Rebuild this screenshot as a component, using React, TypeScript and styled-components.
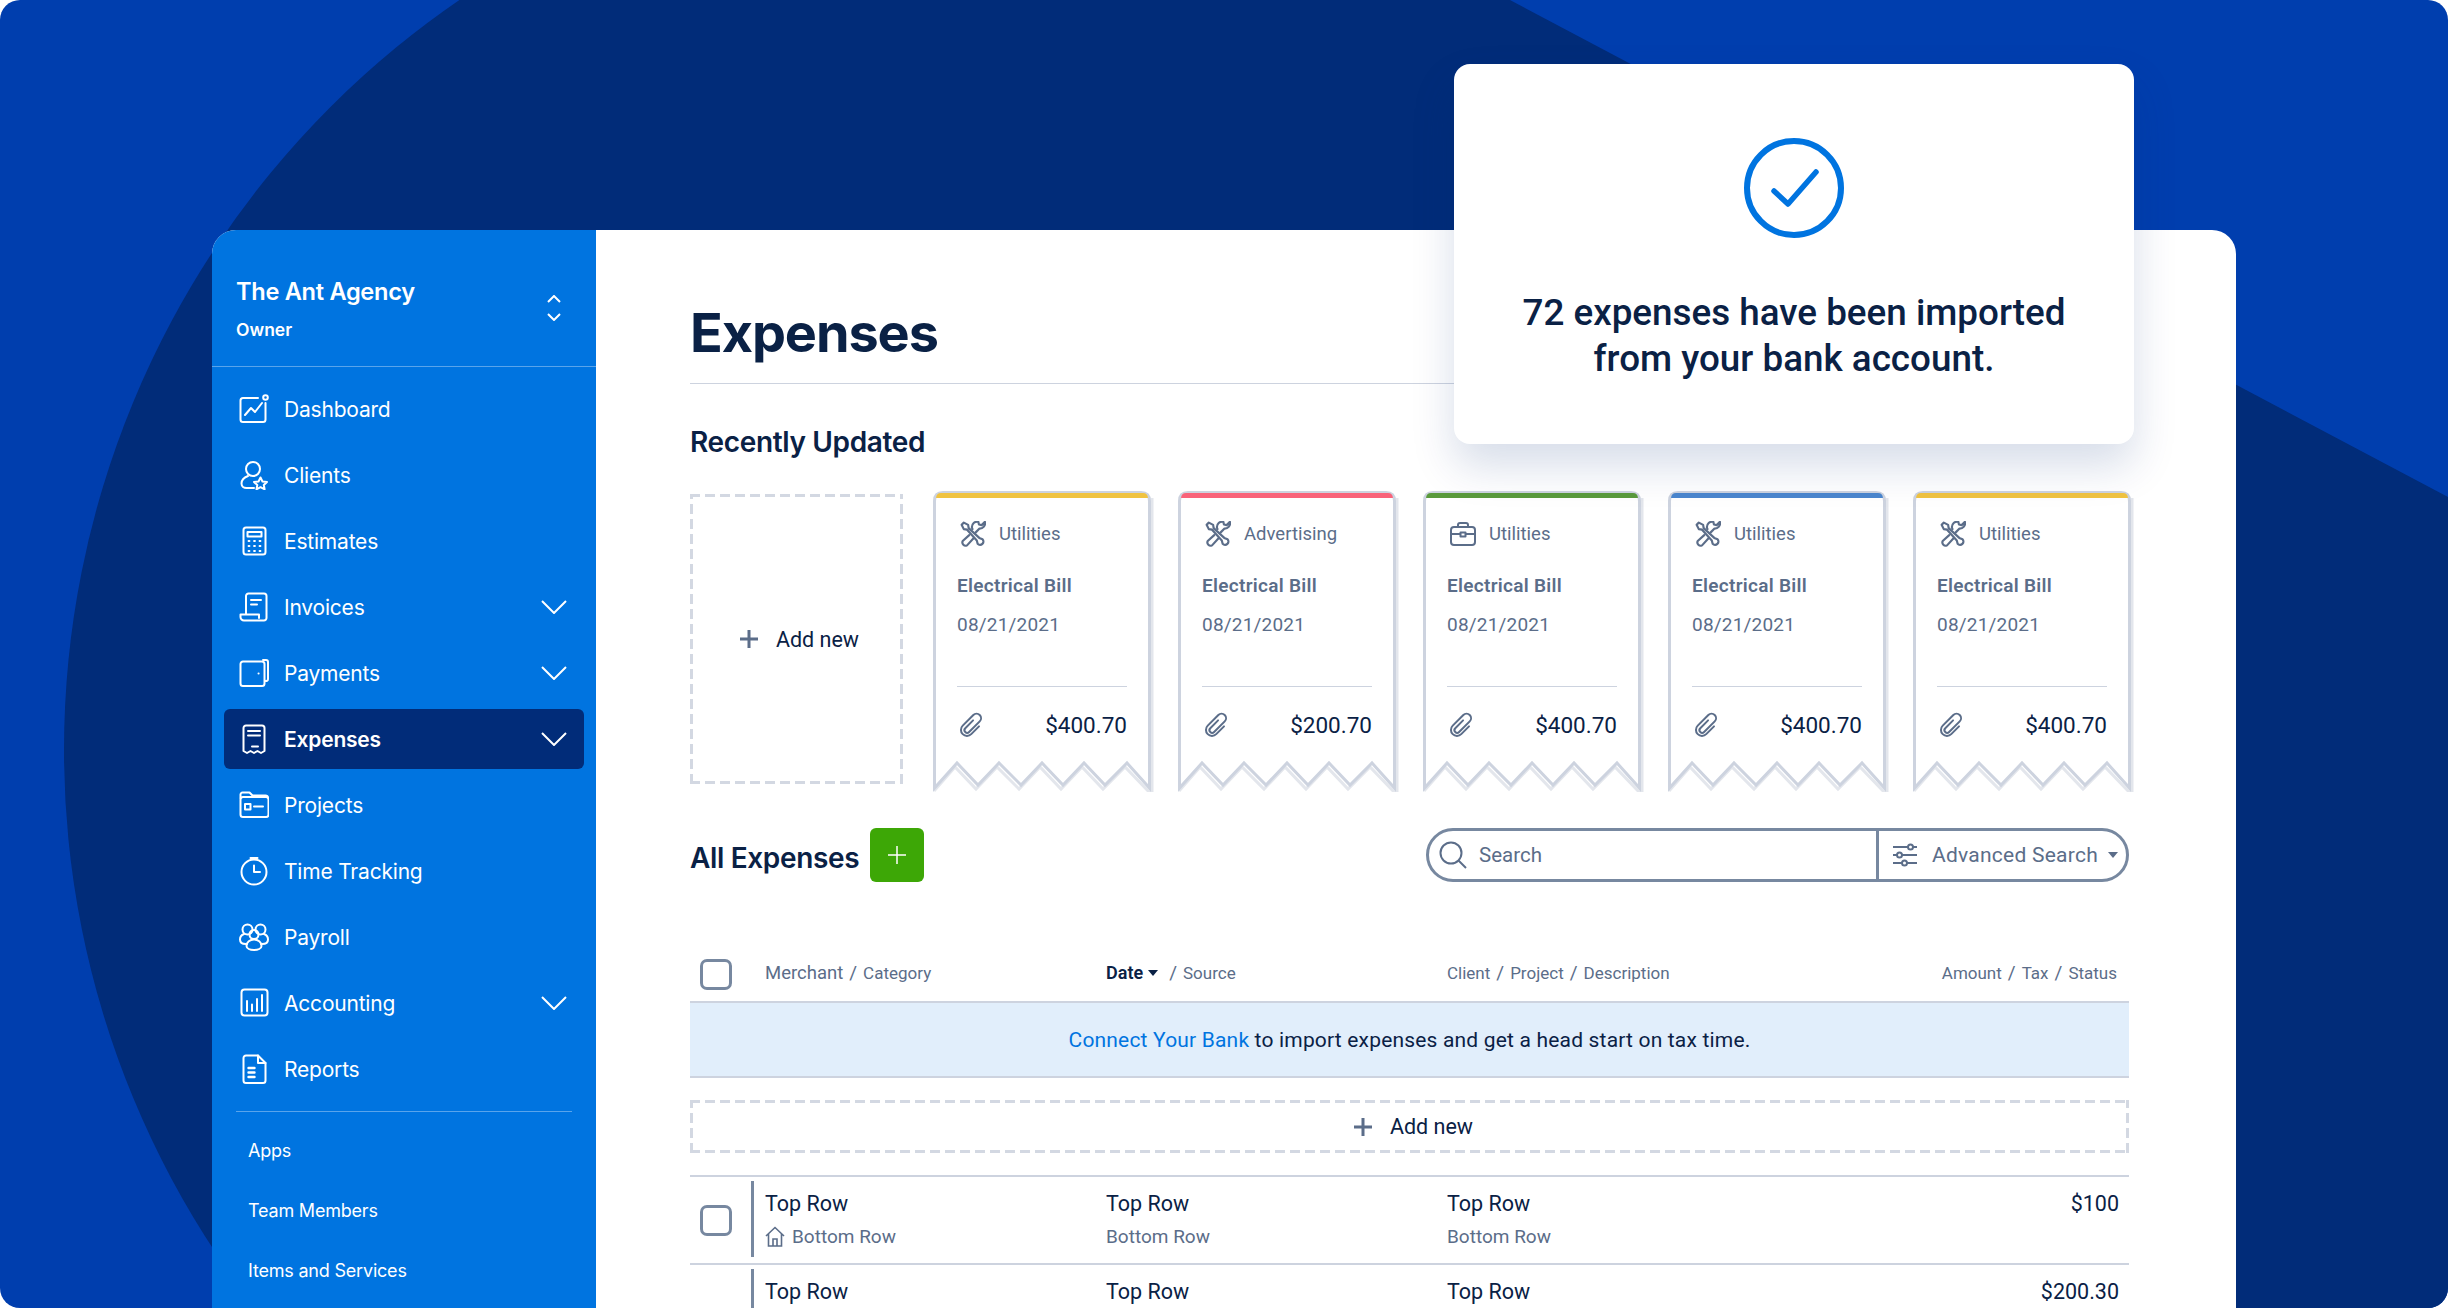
import React from 'react';
import styled, { createGlobalStyle, css } from 'styled-components';

const NAVY = '#0a2145';
const SLATE = '#5b6d89';
const LINE = '#cdd3df';
const STEEL = '#7788a0';
const BLUE = '#0074e0';
const DEEP = '#012c79';

const GlobalStyle = createGlobalStyle`
    html, body {
        margin: 0;
        padding: 0;
        background: #fff;
    }
    * {
        box-sizing: border-box;
    }
`;

// long dashes on all four sides, a dashed border is too short for these
const dashedEdge = css`
    background-image:
        repeating-linear-gradient(90deg, #d3d8e2 0 10px, transparent 10px 15px),
        repeating-linear-gradient(90deg, #d3d8e2 0 10px, transparent 10px 15px),
        repeating-linear-gradient(0deg, #d3d8e2 0 10px, transparent 10px 15px),
        repeating-linear-gradient(0deg, #d3d8e2 0 10px, transparent 10px 15px);
    background-position: left top, left bottom, left top, right top;
    background-repeat: no-repeat;
    background-size: 100% 3px, 100% 3px, 3px 100%, 3px 100%;
`;

const Frame = styled.div`
    position: relative;
    display: flex;
    width: 2448px;
    height: 1308px;
    padding: 230px 212px 0;
    overflow: hidden;
    border-radius: 20px;
    background: #003eae;
    font-family: Roboto, 'Liberation Sans', sans-serif;
    color: ${NAVY};
`;

const Backdrop = styled.svg`
    position: absolute;
    inset: 0;
`;

const Window = styled.div`
    position: relative;
    display: flex;
    width: 2024px;
    height: 1078px;
    overflow: hidden;
    border-radius: 24px 24px 0 0;
    background: #fff;
`;

const Sidebar = styled.aside`
    flex: 0 0 384px;
    background: ${BLUE};
    color: #fff;
    font-family: Inter, 'Liberation Sans', sans-serif;
`;

const Account = styled.div`
    display: flex;
    align-items: center;
    justify-content: space-between;
    height: 137px;
    padding: 44px 35px 25px 24px;
    border-bottom: 1px solid rgba(255, 255, 255, 0.35);
`;

const AccountName = styled.div`
    font-size: 23.6px;
    font-weight: 600;
    line-height: 36px;
    letter-spacing: -0.3px;
`;

const AccountRole = styled.div`
    margin-top: 8px;
    font-size: 17.5px;
    font-weight: 600;
    line-height: 24px;
`;

const NavList = styled.nav`
    display: flex;
    flex-direction: column;
    gap: 6px;
    padding: 12px 12px 0;
`;

const NavItem = styled.div<{ $active?: boolean }>`
    display: flex;
    align-items: center;
    height: 60px;
    padding: 0 17px 0 15px;
    border-radius: 6px;
    background: ${({ $active }) => ($active ? DEEP : 'transparent')};
    font-size: 21px;
    font-weight: ${({ $active }) => ($active ? 600 : 400)};
    letter-spacing: -0.2px;
`;

const NavIcon = styled.svg`
    flex: 0 0 30px;
    margin-right: 15px;
    fill: none;
    stroke: #fff;
    stroke-width: 2;
    stroke-linecap: round;
    stroke-linejoin: round;
`;

const NavLabel = styled.span`
    flex: 1;
`;

const NavDivider = styled.div`
    height: 1px;
    margin: 12px 24px 8px;
    background: rgba(255, 255, 255, 0.35);
`;

const SubItem = styled.div`
    display: flex;
    align-items: center;
    height: 60px;
    padding-left: 36px;
    font-size: 18px;
    letter-spacing: -0.2px;
`;

const Content = styled.main`
    flex: 0 0 1640px;
    min-width: 0;
    padding: 0 107px 0 94px;
`;

const PageTitle = styled.h1`
    height: 154px;
    margin: 0;
    padding-top: 71px;
    border-bottom: 1px solid ${LINE};
    font-family: Inter, 'Liberation Sans', sans-serif;
    font-size: 54px;
    font-weight: 700;
    line-height: 64px;
    letter-spacing: -1.1px;
`;

const SectionTitle = styled.h2`
    margin: 0;
    font-family: Inter, 'Liberation Sans', sans-serif;
    font-size: 28px;
    font-weight: 600;
    line-height: 36px;
    letter-spacing: -0.35px;
`;

const RecentTitle = styled(SectionTitle)`
    margin-top: 40px;
`;

const AllTitle = styled(SectionTitle)`
    padding-top: 5px;
`;

const CardRow = styled.div`
    display: flex;
    gap: 25px;
    margin-top: 31px;
`;

const AddTile = styled.div`
    ${dashedEdge}
    display: flex;
    flex: 0 0 213px;
    align-items: center;
    justify-content: center;
    gap: 17px;
    height: 290px;
    margin: 3px 5px 0 0;
    padding-left: 5px;
    font-size: 21.5px;
`;

const Receipt = styled.div`
    position: relative;
    flex: 0 0 220px;
    height: 301px;
    padding: 31px 26px 0 24px;
`;

const ReceiptOutline = styled.svg`
    position: absolute;
    top: 0;
    left: 0;
`;

const ReceiptBody = styled.div`
    position: relative;
`;

const CategoryRow = styled.div`
    display: flex;
    align-items: center;
    gap: 13px;
    height: 24px;
    padding-left: 3px;
    color: ${SLATE};
    font-size: 18.5px;
`;

const ToolIcon = styled.svg`
    flex: none;
    fill: none;
    stroke: ${SLATE};
    stroke-width: 2;
    stroke-linecap: round;
    stroke-linejoin: round;
`;

const ReceiptName = styled.div`
    margin-top: 28px;
    color: ${SLATE};
    font-size: 19px;
    font-weight: 600;
    line-height: 24px;
    letter-spacing: 0.3px;
`;

const ReceiptDate = styled.div`
    margin-top: 15px;
    color: ${SLATE};
    font-size: 19px;
    line-height: 24px;
    letter-spacing: 0.2px;
`;

const ReceiptFooter = styled.div`
    display: flex;
    align-items: center;
    justify-content: space-between;
    height: 52px;
    margin-top: 49px;
    padding-top: 25px;
    border-top: 1px solid ${LINE};
    font-size: 22.5px;
`;

const ClipIcon = styled(ToolIcon)`
    margin-left: 1px;
`;

const Toolbar = styled.div`
    display: flex;
    align-items: center;
    margin-top: 36px;
`;

const GreenButton = styled.div`
    display: flex;
    align-items: center;
    justify-content: center;
    width: 54px;
    height: 54px;
    margin-left: 11px;
    border-radius: 6px;
    background: #3da706;
`;

const SearchBox = styled.div`
    display: flex;
    width: 703px;
    height: 54px;
    margin-left: auto;
    border: 3px solid ${STEEL};
    border-radius: 27px;
    color: ${SLATE};
`;

const SearchField = styled.div`
    display: flex;
    flex: 1;
    align-items: center;
    gap: 12px;
    padding-left: 10px;
    font-size: 20.5px;
`;

const AdvancedSearch = styled.div`
    display: flex;
    flex: 0 0 250px;
    align-items: center;
    gap: 14px;
    padding-left: 13px;
    border-left: 3px solid ${STEEL};
    font-size: 21px;
    letter-spacing: 0.25px;
    white-space: nowrap;
`;

const Caret = styled.span<{ $dark?: boolean }>`
    display: inline-block;
    width: 0;
    height: 0;
    margin: 0 5px;
    border-top: 6px solid ${({ $dark }) => ($dark ? NAVY : SLATE)};
    border-right: 5px solid transparent;
    border-left: 5px solid transparent;
`;

const SearchCaret = styled(Caret)`
    margin: 0 0 0 -4px;
`;

const TableGrid = styled.div`
    display: grid;
    grid-template-columns: 61px 341px 341px 1fr auto;
    padding-right: 10px;
`;

const TableHead = styled(TableGrid)`
    align-items: center;
    height: 42px;
    margin-top: 77px;
    padding-right: 12px;
    padding-bottom: 12px;
    color: ${SLATE};
    font-size: 17px;
`;

const HeadCell = styled.div`
    display: flex;
    align-items: center;
    padding: 0 0 4px 14px;
    white-space: pre;
`;

const HeadMain = styled.span`
    font-size: 18.5px;
`;

const HeadDate = styled.span`
    color: ${NAVY};
    font-size: 18px;
    font-weight: 600;
`;

const Slash = styled.span`
    margin: 0 6px;
    font-size: 19px;
`;

const CheckCell = styled.div`
    display: flex;
    align-items: center;
    padding-left: 10px;
`;

const CheckBox = styled.div`
    width: 32px;
    height: 31px;
    border: 3px solid ${STEEL};
    border-radius: 7px;
    background: #fff;
`;

const Banner = styled.div`
    display: flex;
    align-items: center;
    justify-content: center;
    height: 77px;
    border-top: 2px solid ${LINE};
    border-bottom: 2px solid ${LINE};
    background: #e1eefb;
    font-size: 21px;
    letter-spacing: 0.18px;
    white-space: pre;
`;

const BankLink = styled.span`
    color: ${BLUE};
`;

const AddStrip = styled.div`
    ${dashedEdge}
    display: flex;
    align-items: center;
    justify-content: center;
    gap: 17px;
    height: 53px;
    margin-top: 22px;
    padding-left: 7px;
    font-size: 21.5px;
`;

const Rows = styled.div`
    margin-top: 22px;
`;

const Row = styled(TableGrid)<{ $tall?: boolean }>`
    height: ${({ $tall }) => ($tall ? 118 : 88)}px;
    border-top: 2px solid ${LINE};
`;

const RowCell = styled.div<{ $bar?: boolean; $right?: boolean; $tall?: boolean }>`
    display: flex;
    flex-direction: column;
    gap: 8px;
    height: ${({ $tall }) => ($tall ? 106 : 76)}px;
    margin-top: 4px;
    padding: 10px 0 0 ${({ $bar }) => ($bar ? 11 : 14)}px;
    border-left: ${({ $bar }) => ($bar ? `3px solid ${STEEL}` : 'none')};
    text-align: ${({ $right }) => ($right ? 'right' : 'left')};
`;

const TopLine = styled.div`
    font-size: 21.5px;
    line-height: 26px;
`;

const BottomLine = styled.div`
    display: flex;
    align-items: center;
    gap: 7px;
    color: ${SLATE};
    font-size: 19px;
    line-height: 24px;
`;

const Toast = styled.div`
    position: absolute;
    top: 64px;
    left: 1454px;
    display: flex;
    flex-direction: column;
    align-items: center;
    width: 680px;
    height: 380px;
    padding-top: 74px;
    border-radius: 16px;
    background: #fff;
    box-shadow: 0 22px 44px rgba(1, 44, 121, 0.16);
`;

const ToastText = styled.div`
    margin-top: 52px;
    font-size: 36.8px;
    font-weight: 500;
    line-height: 46px;
    text-align: center;
`;

const Chevron = () => (
    <svg width="26" height="14" viewBox="0 0 26 14" fill="none" stroke="#fff" strokeWidth="2">
        <path d="M1 1l12 12L25 1" />
    </svg>
);

const navItems: { label: string; open?: boolean; active?: boolean; icon: React.ReactNode }[] = [
    {
        label: 'Dashboard',
        icon: (
            <>
                <path d="M19 4H4a2.5 2.5 0 0 0-2.5 2.5v19A2.5 2.5 0 0 0 4 28h20a2.5 2.5 0 0 0 2.5-2.5V9" />
                <circle cx="26.5" cy="3.5" r="2.3" />
                <path d="M6 21l6-7 4 4 7-9" />
            </>
        ),
    },
    {
        label: 'Clients',
        icon: (
            <>
                <circle cx="14" cy="9" r="7" />
                <path d="M9 16c-4 1.5-6.5 4-6.5 7.5 0 3 2.5 4.5 5 4.5H15" />
                <path d="M21.5 17.5l2 4 4.5.5-3.2 3 .8 4.3-4.1-2.1-4 2.1.8-4.3-3.3-3 4.5-.5z" />
            </>
        ),
    },
    {
        label: 'Estimates',
        icon: (
            <>
                <rect x="4.5" y="1.5" width="22" height="27" rx="2.5" />
                <rect x="8.5" y="6" width="14" height="4.5" />
                <path
                    d="M9.5 15h1M15 15h1M20.5 15h1M9.5 20h1M15 20h1M20.5 20h1M9.5 25h1M15 25h1M20.5 25h1"
                    strokeWidth="1.8"
                />
            </>
        ),
    },
    {
        label: 'Invoices',
        open: true,
        icon: (
            <>
                <path d="M7 22V4a2.5 2.5 0 0 1 2.5-2.5H25A2.5 2.5 0 0 1 27.5 4v22a2.5 2.5 0 0 1-2.5 2.5H5A3.5 3.5 0 0 1 1.5 25v-2.5H20v3.5" />
                <path d="M12 8h10M12 12.5h6" />
            </>
        ),
    },
    {
        label: 'Payments',
        open: true,
        icon: (
            <>
                <path d="M4 3.5h19a2.5 2.5 0 0 1 2.5 2.5v19.5a2.5 2.5 0 0 1-2.5 2.5H4a2.5 2.5 0 0 1-2.5-2.5V6A2.5 2.5 0 0 1 4 3.5z" />
                <path d="M24 2h3a2 2 0 0 1 2 2v17a2 2 0 0 1-3 1.8" />
                <path d="M19.5 15.5h.1" />
            </>
        ),
    },
    {
        label: 'Expenses',
        open: true,
        active: true,
        icon: (
            <>
                <path d="M4.5 27V4A2.5 2.5 0 0 1 7 1.5h16A2.5 2.5 0 0 1 25.5 4v23l-3.5 2-3.5-2-3.5 2-3.5-2-3.5 2z" />
                <path d="M9 7h12M9 11.5h12M13 22.5h6" />
            </>
        ),
    },
    {
        label: 'Projects',
        icon: (
            <>
                <path d="M1.5 8V4.5a2 2 0 0 1 2-2h7l3 3h13a2.5 2.5 0 0 1 2.5 2" />
                <rect x="1.5" y="7" width="28" height="20" rx="2.5" />
                <rect x="6" y="14" width="5.5" height="5.5" />
                <path d="M15 16.5h9" />
            </>
        ),
    },
    {
        label: 'Time Tracking',
        icon: (
            <>
                <circle cx="15" cy="16" r="12.5" />
                <path d="M11.5 2h7M15 9.5V16h6" />
            </>
        ),
    },
    {
        label: 'Payroll',
        icon: (
            <>
                <circle cx="8.5" cy="7.5" r="5" />
                <circle cx="21.5" cy="7.5" r="5" />
                <circle cx="15" cy="12.5" r="4.5" />
                <path d="M5 12c-2.5 1-4 3.2-4 5.5 0 2.8 2.5 4.5 6 4.5h1" />
                <path d="M25 12c2.5 1 4 3.2 4 5.5 0 2.8-2.5 4.5-6 4.5h-1" />
                <path d="M7.5 24c0-4 3.5-6.5 7.5-6.5s7.5 2.5 7.5 6.5c0 2.5-3.5 4-7.5 4s-7.5-1.5-7.5-4z" />
            </>
        ),
    },
    {
        label: 'Accounting',
        open: true,
        icon: (
            <>
                <rect x="2.5" y="1.5" width="26" height="26" rx="3" />
                <path d="M8 13v10M13 16.5V23M18 11v12M23 7v16" />
            </>
        ),
    },
    {
        label: 'Reports',
        icon: (
            <>
                <path d="M7 1.5h12L26.5 9v17.5a2.5 2.5 0 0 1-2.5 2.5H7a2.5 2.5 0 0 1-2.5-2.5V4A2.5 2.5 0 0 1 7 1.5z" />
                <path d="M19 1.5V9h7.5" />
                <path d="M9.5 14h6M9.5 18.5h6M9.5 23h6" strokeWidth="2.4" />
            </>
        ),
    },
];

const ToolsGlyph = () => (
    <ToolIcon width="26" height="26" viewBox="0 0 24 24">
        <path d="M3.5 1.5l-2 2 2 4 3 .5 9 10 .8 3a2.8 2.8 0 0 0 4.5-4.2l-3-1.2-9.8-9-.5-3z" />
        <path d="M14.5 10.5L18 7a5 5 0 0 0 5-6.2L20 3.8l-2.5-.6-.6-2.500A5 5 0 0 0 11 6l.5 1.5" />
        <path d="M8.5 13l-6 5.5a3 3 0 0 0 4 4l6-6.5" />
    </ToolIcon>
);

const CaseGlyph = () => (
    <ToolIcon width="26" height="24" viewBox="0 0 26 24">
        <rect x="1" y="5" width="24" height="18" rx="3" />
        <path d="M8 5V3a2 2 0 0 1 2-2h6a2 2 0 0 1 2 2v2M1 12h9M16 12h9M10.5 10.5h5v4h-5z" />
    </ToolIcon>
);

const ClipGlyph = () => (
    <ClipIcon width="28" height="28" viewBox="3 -1 28 28">
        <path
            transform="rotate(45 17 13)"
            d="M14.5 9v11a2.7 2.7 0 0 0 5.4 0V5a4.5 4.5 0 0 0-9 0v15a6 6 0 0 0 12 0V9"
        />
    </ClipIcon>
);

const PlusGlyph = () => (
    <svg width="20" height="20" viewBox="0 0 20 20" stroke={SLATE} strokeWidth="3">
        <path d="M10 1v18M1 10h18" />
    </svg>
);

const receipts = [
    { stripe: '#f0c341', category: 'Utilities', amount: '$400.70', glyph: <ToolsGlyph /> },
    { stripe: '#f9637a', category: 'Advertising', amount: '$200.70', glyph: <ToolsGlyph /> },
    { stripe: '#5a9a3c', category: 'Utilities', amount: '$400.70', glyph: <CaseGlyph /> },
    { stripe: '#4a86ce', category: 'Utilities', amount: '$400.70', glyph: <ToolsGlyph /> },
    { stripe: '#f0c341', category: 'Utilities', amount: '$400.70', glyph: <ToolsGlyph /> },
];

const RECEIPT_EDGE =
    'M1.5 297V10Q1.5 1.5 10 1.5H208Q216.5 1.5 216.5 10V297L194 272L172 294L151 272L130 294L109 272L88 294L66 272L45 294L24 272Z';
const RECEIPT_SHADOW = 'M1 300L22 276L43 298L64 276L86 298L107 276L128 298L149 276L170 298L192 276L219 304V7';

const ReceiptCard = ({ stripe, category, amount, glyph }: (typeof receipts)[number]) => (
    <Receipt>
        <ReceiptOutline width="221" height="301" viewBox="0 0 221 301" fill="none">
            <path d={RECEIPT_SHADOW} stroke="#e3e6ec" strokeWidth="3" />
            <path d={RECEIPT_EDGE} fill="#fff" stroke={LINE} strokeWidth="3" />
            <path d="M3 7Q3.5 2 8 2H210Q214.5 2 215 7Z" fill={stripe} />
        </ReceiptOutline>
        <ReceiptBody>
            <CategoryRow>
                {glyph}
                {category}
            </CategoryRow>
            <ReceiptName>Electrical Bill</ReceiptName>
            <ReceiptDate>08/21/2021</ReceiptDate>
            <ReceiptFooter>
                <ClipGlyph />
                {amount}
            </ReceiptFooter>
        </ReceiptBody>
    </Receipt>
);

const App = () => (
    <Frame>
        <GlobalStyle />
        <Backdrop width="2448" height="1308" viewBox="0 0 2448 1308">
            <circle cx="973" cy="750" r="909" fill={DEEP} />
            <path d="M973 0H1510L2448 497V1308H973Z" fill={DEEP} />
        </Backdrop>
        <Window>
            <Sidebar>
                <Account>
                    <div>
                        <AccountName>The Ant Agency</AccountName>
                        <AccountRole>Owner</AccountRole>
                    </div>
                    <svg width="14" height="26" viewBox="0 0 14 26" fill="none" stroke="#fff" strokeWidth="2">
                        <path d="M1 7l6-6 6 6M1 19l6 6 6-6" />
                    </svg>
                </Account>
                <NavList>
                    {navItems.map(item => (
                        <NavItem key={item.label} $active={item.active}>
                            <NavIcon width="30" height="30" viewBox="0 0 30 30">
                                {item.icon}
                            </NavIcon>
                            <NavLabel>{item.label}</NavLabel>
                            {item.open && <Chevron />}
                        </NavItem>
                    ))}
                </NavList>
                <NavDivider />
                <SubItem>Apps</SubItem>
                <SubItem>Team Members</SubItem>
                <SubItem>Items and Services</SubItem>
            </Sidebar>
            <Content>
                <PageTitle>Expenses</PageTitle>
                <RecentTitle>Recently Updated</RecentTitle>
                <CardRow>
                    <AddTile>
                        <PlusGlyph />
                        Add new
                    </AddTile>
                    {receipts.map((receipt, index) => (
                        <ReceiptCard key={index} {...receipt} />
                    ))}
                </CardRow>
                <Toolbar>
                    <AllTitle>All Expenses</AllTitle>
                    <GreenButton>
                        <svg width="22" height="22" viewBox="0 0 22 22" stroke="#fff" strokeWidth="1.5">
                            <path d="M11 2v18M2 11h18" />
                        </svg>
                    </GreenButton>
                    <SearchBox>
                        <SearchField>
                            <svg width="28" height="28" viewBox="0 0 28 28" fill="none" stroke={SLATE} strokeWidth="2">
                                <circle cx="12" cy="12" r="10.5" />
                                <path d="M19.5 19.5L27 27" />
                            </svg>
                            Search
                        </SearchField>
                        <AdvancedSearch>
                            <svg width="26" height="24" viewBox="0 0 26 24" fill="none" stroke={SLATE} strokeWidth="2">
                                <path d="M1 4h15M21 4h4M1 12h4M10 12h15M1 20h9M15 20h10" />
                                <circle cx="18.5" cy="4" r="2.5" />
                                <circle cx="7.5" cy="12" r="2.5" />
                                <circle cx="12.5" cy="20" r="2.5" />
                            </svg>
                            Advanced Search
                            <SearchCaret />
                        </AdvancedSearch>
                    </SearchBox>
                </Toolbar>
                <TableHead>
                    <CheckCell>
                        <CheckBox />
                    </CheckCell>
                    <HeadCell>
                        <HeadMain>Merchant</HeadMain>
                        <Slash>/</Slash>
                        Category
                    </HeadCell>
                    <HeadCell>
                        <HeadDate>Date</HeadDate>
                        <Caret $dark />
                        <Slash>/</Slash>
                        Source
                    </HeadCell>
                    <HeadCell>
                        Client
                        <Slash>/</Slash>
                        Project
                        <Slash>/</Slash>
                        Description
                    </HeadCell>
                    <HeadCell>
                        Amount
                        <Slash>/</Slash>
                        Tax
                        <Slash>/</Slash>
                        Status
                    </HeadCell>
                </TableHead>
                <Banner>
                    <BankLink>Connect Your Bank</BankLink> to import expenses and get a head start on tax time.
                </Banner>
                <AddStrip>
                    <PlusGlyph />
                    Add new
                </AddStrip>
                <Rows>
                    <Row>
                        <CheckCell>
                            <CheckBox />
                        </CheckCell>
                        <RowCell $bar>
                            <TopLine>Top Row</TopLine>
                            <BottomLine>
                                <svg width="20" height="22" viewBox="0 0 20 22" fill="none" stroke={SLATE} strokeWidth="1.6">
                                    <path d="M1 10l9-8.5L19 10M3.5 8v12h13V8M8 20v-7h4v7" />
                                </svg>
                                Bottom Row
                            </BottomLine>
                        </RowCell>
                        <RowCell>
                            <TopLine>Top Row</TopLine>
                            <BottomLine>Bottom Row</BottomLine>
                        </RowCell>
                        <RowCell>
                            <TopLine>Top Row</TopLine>
                            <BottomLine>Bottom Row</BottomLine>
                        </RowCell>
                        <RowCell $right>
                            <TopLine>$100</TopLine>
                        </RowCell>
                    </Row>
                    <Row $tall>
                        <CheckCell>
                            <CheckBox />
                        </CheckCell>
                        <RowCell $bar $tall>
                            <TopLine>Top Row</TopLine>
                        </RowCell>
                        <RowCell $tall>
                            <TopLine>Top Row</TopLine>
                        </RowCell>
                        <RowCell $tall>
                            <TopLine>Top Row</TopLine>
                        </RowCell>
                        <RowCell $right $tall>
                            <TopLine>$200.30</TopLine>
                        </RowCell>
                    </Row>
                </Rows>
            </Content>
        </Window>
        <Toast>
            <svg width="100" height="100" viewBox="0 0 100 100" fill="none" stroke={BLUE} strokeLinecap="round" strokeLinejoin="round">
                <circle cx="50" cy="50" r="47" strokeWidth="6" />
                <path d="M30 53l14 13 28-32" strokeWidth="5.5" />
            </svg>
            <ToastText>
                72 expenses have been imported
                <br />
                from your bank account.
            </ToastText>
        </Toast>
    </Frame>
);

export default App;
